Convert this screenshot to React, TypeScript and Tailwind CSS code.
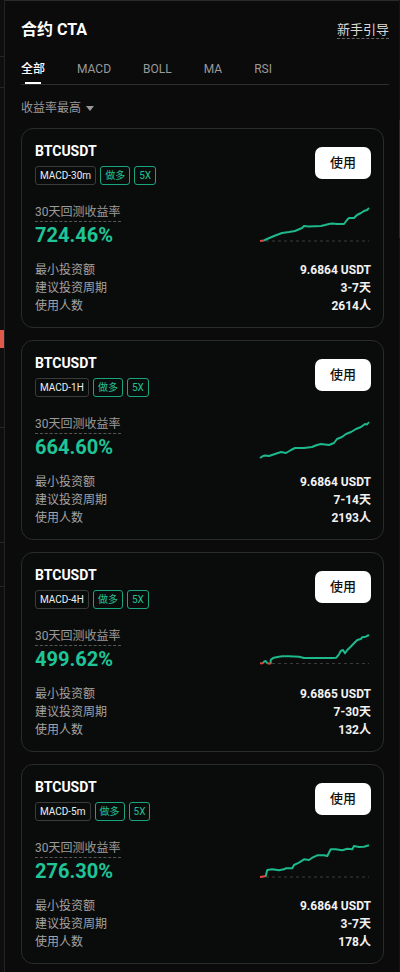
import React from 'react';

type Pt = [number, number];

interface Strategy {
  tag: string;
  rate: string;
  minAmount: string;
  period: string;
  users: string;
  red: Pt[][];
  green: Pt[][];
  baseline?: number;
}

const strategies: Strategy[] = [
  {
    tag: 'MACD-30m',
    rate: '724.46%',
    minAmount: '9.6864 USDT',
    period: '3-7天',
    users: '2614人',
    baseline: 39,
    red: [[[1, 39], [5, 38.5]]],
    green: [[
      [5, 38.5], [8, 37], [15, 34], [23, 31], [30, 30], [36, 29], [43, 26], [45, 24], [50, 24.5],
      [62, 24], [70, 22], [73, 21.5], [78, 22], [85, 22], [88, 18], [90, 16], [95, 16], [98, 13],
      [102, 11], [105, 9], [108, 8], [110, 6],
    ]],
  },
  {
    tag: 'MACD-1H',
    rate: '664.60%',
    minAmount: '9.6864 USDT',
    period: '7-14天',
    users: '2193人',
    red: [],
    green: [[
      [1, 44], [4, 42], [6, 41.5], [10, 42], [16, 40], [22, 38], [27, 39], [32, 36], [36, 34], [45, 34],
      [53, 33], [58, 31], [62, 30], [70, 31], [75, 29], [78, 25], [83, 23], [87, 20], [92, 18],
      [97, 15], [102, 13], [106, 10], [108, 10.5], [110, 8],
    ]],
  },
  {
    tag: 'MACD-4H',
    rate: '499.62%',
    minAmount: '9.6865 USDT',
    period: '7-30天',
    users: '132人',
    baseline: 37.5,
    red: [[[1, 37.3], [4, 37.3]], [[8.3, 37.3], [11.7, 37.7]]],
    green: [
      [[4, 37.3], [5, 35.7], [6.7, 35], [8.3, 37.3]],
      [
        [11.7, 37.7], [11.7, 34], [14, 32], [18.3, 31], [23.3, 30.3], [30, 30.3], [40, 30.7], [45, 32],
        [56.7, 32], [73.3, 32], [77.3, 31.7], [80, 28.3], [81.7, 25], [84, 24], [86, 27.3], [88.3, 24],
        [91.7, 20.7], [95, 17.3], [98.3, 14], [101.7, 13], [103.3, 11.3], [106.7, 10.7], [110, 9],
      ],
    ],
  },
  {
    tag: 'MACD-5m',
    rate: '276.30%',
    minAmount: '9.6864 USDT',
    period: '3-7天',
    users: '178人',
    baseline: 39,
    red: [[[1, 39], [6, 38.3]]],
    green: [[
      [6, 38.3], [6.7, 38], [8.3, 32], [13.3, 31.3], [20, 32.3], [25, 31.3], [26.7, 30.3], [33.3, 30.3],
      [35, 27], [40, 24.7], [45, 21.3], [50, 22], [53.3, 19.7], [58.3, 17.3], [65, 17.3], [68.3, 18],
      [71.7, 11.3], [76.7, 11.3], [83.3, 12.3], [88.3, 10.7], [93.3, 11.3], [95, 8], [100, 9],
      [105, 8.7], [110, 7.3],
    ]],
  },
];

const toPoints = (pts: Pt[]) => pts.map(([x, y]) => `${x},${y}`).join(' ');

const Sparkline: React.FC<{ s: Strategy }> = ({ s }) => (
  <svg width="112" height="46" viewBox="0 0 112 46" className="-mt-[2px] shrink-0 block">
    {s.baseline !== undefined && (
      <line x1="1" y1={s.baseline} x2="110" y2={s.baseline} stroke="#3a3a3a" strokeWidth="1" strokeDasharray="3 3" />
    )}
    {s.green.map((seg, i) => (
      <polyline key={`g${i}`} points={toPoints(seg)} fill="none" stroke="#1db88c" strokeWidth="2" strokeLinejoin="round" />
    ))}
    {s.red.map((seg, i) => (
      <polyline key={`r${i}`} points={toPoints(seg)} fill="none" stroke="#e2463f" strokeWidth="2" strokeLinejoin="round" />
    ))}
  </svg>
);

const StrategyCard: React.FC<{ s: Strategy }> = ({ s }) => (
  <div className="rounded-[12px] border border-[#2a2b2b] bg-[#0a0c0c] pt-3 pb-3 pl-[13px] pr-[12px]">
    {/* Header */}
    <div className="flex items-center justify-between">
      <div>
        <div className="text-[14px] leading-[20px] font-bold text-white">BTCUSDT</div>
        <div className="mt-[5px] flex gap-[4px]">
          <span className="h-[19px] px-[4px] rounded-[3px] border border-[#3a3b3b] text-[10px] leading-[17px] text-[#ececec]">
            {s.tag}
          </span>
          <span className="h-[19px] px-[4px] rounded-[3px] border border-[#1aa57e] text-[10px] leading-[17px] text-[#22c194]">
            做多
          </span>
          <span className="h-[19px] px-[4px] rounded-[3px] border border-[#1aa57e] text-[10px] leading-[17px] text-[#22c194]">
            5X
          </span>
        </div>
      </div>
      <button className="w-[56px] h-[32px] rounded-[7px] bg-white text-[13px] font-medium text-[#111]">
        使用
      </button>
    </div>

    {/* Return */}
    <div className="mt-[19px] flex items-start justify-between">
      <div>
        <div className="block w-fit h-[18px] border-b border-dashed border-[#555] text-[12px] leading-[17px] text-[#9b9b9b]">
          30天回测收益率
        </div>
        <div className="h-[26px] text-[20px] leading-[26px] font-bold text-[#1fc597]">{s.rate}</div>
      </div>
      <Sparkline s={s} />
    </div>

    {/* Details */}
    <div className="mt-[13px] text-[12px] leading-[18px]">
      <div className="flex h-[18px] justify-between">
        <span className="text-[#a3a3a3]">最小投资额</span>
        <span className="font-bold text-[#f2f2f2]">{s.minAmount}</span>
      </div>
      <div className="flex h-[18px] justify-between">
        <span className="text-[#a3a3a3]">建议投资周期</span>
        <span className="font-bold text-[#f2f2f2]">{s.period}</span>
      </div>
      <div className="flex h-[18px] justify-between">
        <span className="text-[#a3a3a3]">使用人数</span>
        <span className="font-bold text-[#f2f2f2]">{s.users}</span>
      </div>
    </div>
  </div>
);

const tabs = ['全部', 'MACD', 'BOLL', 'MA', 'RSI'];

export default function App() {
  return (
    <div
      className="flex h-[972px] w-[400px] overflow-hidden bg-[#0b0b0b]"
      style={{ fontFamily: "Roboto, 'Noto Sans CJK SC', sans-serif" }}
    >
      {/* page behind the drawer */}
      <div className="w-[5px] shrink-0 border-r border-[#222] bg-[#0e0e0e] flex flex-col">
        <div className="h-[57px] border-b border-[#262626]" />
        <div className="h-[31px] border-b border-[#262626]" />
        <div className="h-[242px]" />
        <div className="h-[18px] w-[4px] bg-[#e0594b]" />
        <div className="h-[80px] border-b border-[#262626]" />
        <div className="h-[115px] border-b border-[#262626]" />
        <div className="h-[44px] border-b border-[#262626]" />
      </div>

      <div className="flex-1 border-t border-[#2a2a2a] pl-4 pr-[10px]">
        {/* Title */}
        <div className="mt-[18px] flex items-center justify-between">
          <h1 className="text-[16px] leading-[22px] font-bold text-white">合约 CTA</h1>
          <span className="border-b border-dashed border-[#666] text-[13px] leading-[17px] text-[#d8d8d8]">
            新手引导
          </span>
        </div>

        {/* Tabs */}
        <div className="mt-[20px] flex gap-8 border-b border-[#2e2e2e]">
          {tabs.map((t, i) => (
            <div key={t} className="flex flex-col items-center">
              <span className={`h-[17px] text-[12px] leading-[17px] ${i === 0 ? 'text-white font-medium' : 'text-[#9a9a9a]'}`}>
                {t}
              </span>
              <div className={`mt-[4px] h-[2px] w-4 ${i === 0 ? 'bg-white' : 'bg-transparent'}`} />
            </div>
          ))}
        </div>

        {/* Sort */}
        <div className="mt-[15px] flex h-[17px] items-center gap-[5px] text-[12px] leading-[17px] text-[#9a9a9a]">
          收益率最高
          <svg width="8" height="5" viewBox="0 0 8 5">
            <path d="M0 0h8L4 5z" fill="#9a9a9a" />
          </svg>
        </div>

        {/* Cards */}
        <div className="mt-[11px] flex flex-col gap-[12px] pr-[5px]">
          {strategies.map((s) => (
            <StrategyCard key={s.tag} s={s} />
          ))}
        </div>
      </div>

      {/* scrollbar */}
      <div className="w-[1px] shrink-0 bg-[#141414] flex flex-col">
        <div className="h-[120px]" />
        <div className="h-[118px] bg-[#2c2c2c]" />
      </div>
    </div>
  );
}
